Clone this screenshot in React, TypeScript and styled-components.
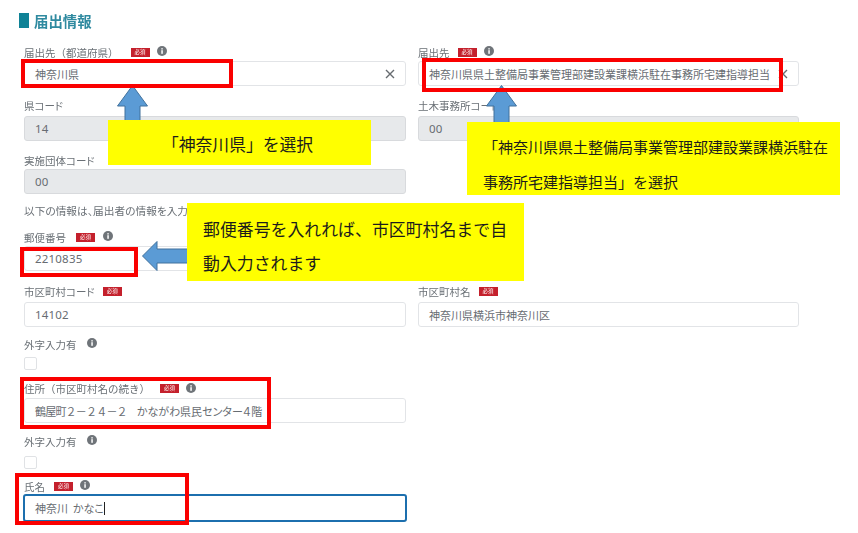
import React from "react";
import styled, { createGlobalStyle } from "styled-components";

const Global = createGlobalStyle`
  html, body { margin: 0; padding: 0; background: #fff; }
  body { font-family: "Noto Sans CJK JP", "Liberation Sans", sans-serif; overflow: hidden; }
`;

const Page = styled.div`
  position: relative;
  width: 858px;
  height: 533px;
  overflow: hidden;
  box-sizing: border-box;
  padding: 12px 59px 0 24px;
  filter: blur(0.35px);
`;

const Heading = styled.h2`
  display: flex;
  align-items: center;
  gap: 5px;
  margin: 0 0 0 -5px;
  height: 17px;
  font-size: 14.4px;
  line-height: 17px;
  font-weight: 700;
  color: #2f8aa0;
`;

const HeadingBar = styled.span`
  width: 10px;
  height: 15px;
  background: #0f8296;
`;

const Row = styled.div<{ $top: number }>`
  display: grid;
  grid-template-columns: 382px 381px;
  column-gap: 12px;
  margin-top: ${(p) => p.$top}px;
`;

const Field = styled.div`
  min-width: 0;
`;

const Label = styled.div<{ $lift?: number; $full?: boolean }>`
  display: flex;
  align-items: center;
  box-sizing: border-box;
  height: 16px;
  padding-bottom: ${(p) => p.$lift ?? 2}px;
  font-size: 10.5px;
  ${(p) => (p.$full ? "" : 'font-feature-settings: "palt";')}
  color: #6a7076;
  white-space: nowrap;
`;

const Required = styled.span<{ $gap?: number }>`
  display: inline-flex;
  align-items: center;
  justify-content: center;
  width: 19px;
  height: 9px;
  margin-left: ${(p) => p.$gap ?? 8}px;
  background: #c4202c;
  color: #fff;
  font-size: 5.5px;
  line-height: 9px;
`;

const InfoWrap = styled.svg<{ $gap: number }>`
  width: 10px;
  height: 10px;
  margin-left: ${(p) => p.$gap}px;
  margin-top: -2px;
  flex: none;
`;

const Info = ({ gap = 7 }: { gap?: number }) => (
  <InfoWrap $gap={gap} viewBox="0 0 10 10">
    <circle cx="5" cy="5" r="5" fill="#6f7479" />
    <rect x="4.3" y="4.2" width="1.5" height="3.6" fill="#fff" />
    <rect x="4.3" y="2.2" width="1.5" height="1.3" fill="#fff" />
  </InfoWrap>
);

const Input = styled.div<{ $disabled?: boolean; $focus?: boolean; $h?: number; $palt?: boolean }>`
  position: relative;
  box-sizing: border-box;
  display: flex;
  align-items: center;
  height: ${(p) => p.$h ?? 25}px;
  padding-left: 10px;
  margin: 0 ${(p) => (p.$focus ? -1 : 0)}px;
  border: ${(p) => (p.$focus ? "2px solid #1c6fae" : "1px solid #e2e4e7")};
  border-radius: 3px;
  background: ${(p) => (p.$disabled ? "#e7e9eb" : "#fff")};
  ${(p) => (p.$disabled ? "border-color: #d8dadd;" : "")}
  ${(p) => (p.$palt ? 'font-feature-settings: "palt";' : "")}
  font-size: 11px;
  color: #676c72;
  white-space: pre;
`;

const Mono = styled.span`
  font-family: "Noto Sans", sans-serif;
  font-size: 11.5px;
  letter-spacing: 0.2px;
`;

const AddressHead = styled.span`
  letter-spacing: -0.8px;
  margin-right: 10px;
`;

const AddressTail = styled.span`
  font-feature-settings: "palt";
`;

const Clear = styled.svg`
  position: absolute;
  right: 10px;
  top: 7px;
  width: 10px;
  height: 10px;
`;

const ClearIcon = () => (
  <Clear viewBox="0 0 10 10">
    <path d="M1 1 L9 9 M9 1 L1 9" stroke="#666b70" strokeWidth="1.4" fill="none" />
  </Clear>
);

const Note = styled.p`
  margin: 9px 0 0;
  height: 16px;
  font-size: 10.7px;
  font-feature-settings: "palt";
  line-height: 16px;
  color: #6a7076;
  white-space: nowrap;
`;

const Check = styled.div<{ $top: number }>`
  box-sizing: border-box;
  width: 13px;
  height: 13px;
  margin-top: ${(p) => p.$top}px;
  border: 1px solid #e0e2e5;
  border-radius: 2px;
  background: #fff;
`;

const Caret = styled.span`
  display: inline-block;
  width: 1px;
  height: 13px;
  background: #222;
`;

const RedBox = styled.div<{ $x: number; $y: number; $w: number; $h: number }>`
  position: absolute;
  box-sizing: border-box;
  left: ${(p) => p.$x}px;
  top: ${(p) => p.$y}px;
  width: ${(p) => p.$w}px;
  height: ${(p) => p.$h}px;
  border: 4px solid #fa0000;
`;

const Callout = styled.div<{
  $x: number;
  $y: number;
  $w: number;
  $h: number;
  $size: number;
  $lh: number;
  $pad: number;
  $padTop: number;
}>`
  position: absolute;
  box-sizing: border-box;
  left: ${(p) => p.$x}px;
  top: ${(p) => p.$y}px;
  width: ${(p) => p.$w}px;
  height: ${(p) => p.$h}px;
  padding: ${(p) => p.$padTop}px 0 0 ${(p) => p.$pad}px;
  background: #ffff00;
  color: #1c1c1c;
  font-size: ${(p) => p.$size}px;
  line-height: ${(p) => p.$lh}px;
  white-space: nowrap;
`;

const CalloutLine = styled.div`
  display: block;
`;

const ArrowSvg = styled.svg<{ $x: number; $y: number }>`
  position: absolute;
  left: ${(p) => p.$x}px;
  top: ${(p) => p.$y}px;
  overflow: visible;
`;

const ARROW_FILL = "#5b9bd5";
const ARROW_STROKE = "#41719c";

const UpArrow = ({ x, y }: { x: number; y: number }) => (
  <ArrowSvg $x={x} $y={y} width="31" height="38" viewBox="0 0 31 38">
    <path d="M15.5 0.5 L30.5 21 L23 21 L23 37.5 L8 37.5 L8 21 L0.5 21 Z" fill={ARROW_FILL} stroke={ARROW_STROKE} />
  </ArrowSvg>
);

const LeftArrow = ({ x, y }: { x: number; y: number }) => (
  <ArrowSvg $x={x} $y={y} width="46" height="30" viewBox="0 0 46 30">
    <path d="M0.5 15 L15 0.5 L15 8 L45.5 8 L45.5 22 L15 22 L15 29.5 Z" fill={ARROW_FILL} stroke={ARROW_STROKE} />
  </ArrowSvg>
);

export default function App() {
  return (
    <>
      <Global />
      <Page>
        <Heading>
          <HeadingBar />
          届出情報
        </Heading>

        <Row $top={16}>
          <Field>
            <Label $full>
              届出先（都道府県）<Required $gap={12}>必須</Required>
              <Info />
            </Label>
            <Input>
              神奈川県
              <ClearIcon />
            </Input>
          </Field>
          <Field>
            <Label>
              届出先<Required>必須</Required>
              <Info />
            </Label>
            <Input>
              神奈川県県土整備局事業管理部建設業課横浜駐在事務所宅建指導担当
              <ClearIcon />
            </Input>
          </Field>
        </Row>

        <Row $top={14}>
          <Field>
            <Label $lift={5}>県コード</Label>
            <Input $disabled>
              <Mono>14</Mono>
            </Input>
          </Field>
          <Field>
            <Label $lift={5}>土木事務所コード</Label>
            <Input $disabled>
              <Mono>00</Mono>
            </Input>
          </Field>
        </Row>

        <Row $top={12}>
          <Field>
            <Label $lift={2}>実施団体コード</Label>
            <Input $disabled>
              <Mono>00</Mono>
            </Input>
          </Field>
        </Row>

        <Note>以下の情報は、届出者の情報を入力</Note>

        <Row $top={11}>
          <Field>
            <Label>
              郵便番号<Required $gap={10}>必須</Required>
              <Info gap={8} />
            </Label>
            <Input>
              <Mono>2210835</Mono>
            </Input>
          </Field>
        </Row>

        <Row $top={15}>
          <Field>
            <Label $lift={5}>
              市区町村コード<Required>必須</Required>
            </Label>
            <Input>
              <Mono>14102</Mono>
            </Input>
          </Field>
          <Field>
            <Label $lift={5}>
              市区町村名<Required>必須</Required>
            </Label>
            <Input>神奈川県横浜市神奈川区</Input>
          </Field>
        </Row>

        <Row $top={10}>
          <Field>
            <Label>
              外字入力有
              <Info gap={10} />
            </Label>
            <Check $top={4} />
          </Field>
        </Row>

        <Row $top={12}>
          <Field>
            <Label $lift={3} $full>
              住所（市区町村名の続き）<Required $gap={10}>必須</Required>
              <Info />
            </Label>
            <Input>
              <AddressHead>鶴屋町２－２４－２</AddressHead>
              <AddressTail>かながわ県民センター４階</AddressTail>
            </Input>
          </Field>
        </Row>

        <Row $top={11}>
          <Field>
            <Label>
              外字入力有
              <Info gap={10} />
            </Label>
            <Check $top={6} />
          </Field>
        </Row>

        <Row $top={9}>
          <Field>
            <Label $lift={0}>
              氏名<Required $gap={9}>必須</Required>
              <Info />
            </Label>
            <Input $focus $h={28} $palt>
              {"神奈川  かなこ"}
              <Caret />
            </Input>
          </Field>
        </Row>

        <UpArrow x={117} y={85} />
        <UpArrow x={486} y={85} />
        <LeftArrow x={142} y={241} />

        <RedBox $x={21} $y={59} $w={212} $h={29} />
        <RedBox $x={422} $y={58} $w={361} $h={34} />
        <RedBox $x={20} $y={247} $w={118} $h={30} />
        <RedBox $x={20} $y={377} $w={251} $h={52} />
        <RedBox $x={15} $y={473} $w={174} $h={52} />

        <Callout $x={108} $y={120} $w={263} $h={45} $size={16.8} $lh={49} $pad={54} $padTop={0}>
          「神奈川県」を選択
        </Callout>
        <Callout $x={467} $y={122} $w={373} $h={73} $size={15} $lh={35} $pad={16} $padTop={7}>
          <CalloutLine>「神奈川県県土整備局事業管理部建設業課横浜駐在</CalloutLine>
          <CalloutLine>事務所宅建指導担当」を選択</CalloutLine>
        </Callout>
        <Callout $x={187} $y={203} $w={337} $h={78} $size={16.9} $lh={34} $pad={16} $padTop={9}>
          <CalloutLine>郵便番号を入れれば、市区町村名まで自</CalloutLine>
          <CalloutLine>動入力されます</CalloutLine>
        </Callout>
      </Page>
    </>
  );
}
